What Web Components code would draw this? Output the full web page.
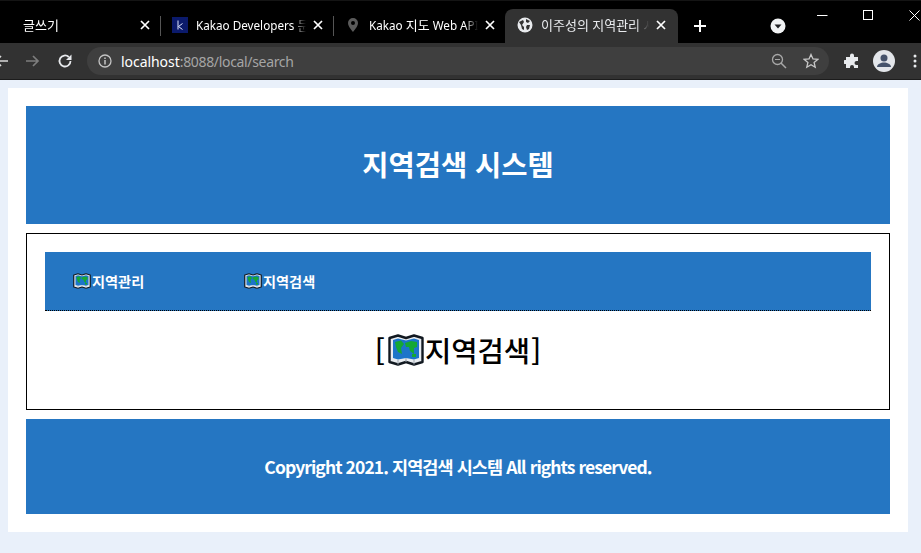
<!DOCTYPE html>
<html lang="ko"><head><meta charset="utf-8"><title>지역검색</title>
<style>
html,body{margin:0;padding:0;width:921px;height:553px;overflow:hidden;background:#e9f0fa;font-family:"Noto Sans CJK KR","Noto Sans",sans-serif}
</style></head><body>
<browser-chrome></browser-chrome>
<app-page>
  <app-banner slot="head" size="28.5" h="118" lift="3">지역검색 시스템</app-banner>
  <main-box slot="main">
    <top-nav slot="nav"><nav-link>지역관리</nav-link><nav-link>지역검색</nav-link></top-nav>
    <span slot="title">지역검색</span>
  </main-box>
  <app-banner slot="foot" size="17.5" h="95" track="-0.92">Copyright 2021. 지역검색 시스템 All rights reserved.</app-banner>
</app-page>
<script>
const mapIcon = `<svg viewBox="0 0 36 32" width="100%" height="100%" style="display:block"><path d="M1.500 4 10 1.500 18 4 26 1.500 34.500 4 34.500 28 26 30.500 18 28 10 30.500 1.500 28Z" fill="#e8ecf0" stroke="#111820" stroke-width="2.400" stroke-linejoin="round"/><path d="M5 6 10 4.500 18 6.500 26 4.500 31 6V24L26 25.500 18 24 10 25.500 5 24Z" fill="#1c75c9"/><path d="M7 8 13 6.500 16 10 13 14 14 20 10 18 8 13ZM17 9 23 7 29 8 29 13 26 14 26 20 22 17 21 13 18 13ZM24 20 28 20 28 23 24 23Z" fill="#14a832"/><path d="M10 30.500V26M26 30.500V26M18 28V24" stroke="#9aa3ad" stroke-width="1"/></svg>`;
function def(name, css, html){
  customElements.define(name, class extends HTMLElement{
    connectedCallback(){ if(this.shadowRoot) return; const r=this.attachShadow({mode:'open'});
      r.innerHTML=`<style>${css}</style>`+(typeof html==='function'?html(this):html); }
  });
}
const x = `<svg width="10" height="10" viewBox="0 0 10 10"><path d="M1 1 9 9M9 1 1 9" stroke="#fff" stroke-width="1.700"/></svg>`;
def('browser-tab',`
 :host{display:flex;align-items:center;box-sizing:border-box;height:34px;width:var(--w,173px);padding:0 10px 3px 12px;color:#fff;font:11.7px "Noto Sans","Noto Sans CJK KR",sans-serif;position:relative}
 :host([active]){background:#323232;border-radius:8px 8px 0 0;color:#e8eaed;padding-right:12px}
 :host([sep])::after{content:"";position:absolute;right:-1px;top:7px;height:20px;width:1px;background:#555}
 .i{width:16px;height:16px;flex:none;margin-right:8px}
 :host([noicon]) .i{display:none}
 .t{flex:1;overflow:hidden;white-space:nowrap;min-width:0;-webkit-mask-image:linear-gradient(90deg,#000 88%,transparent);mask-image:linear-gradient(90deg,#000 88%,transparent)}
 .x{flex:none;width:10px;height:10px;margin-left:7px;display:block}
 .x svg{display:block}
 ::slotted(span){font-size:13px}
`,`<span class="i"><slot name="icon"></slot></span><span class="t"><slot></slot></span><span class="x">${x}</span>`);
def('browser-chrome',`
 :host{display:block;height:80px;background:#000}
 .tabs{height:43px;box-sizing:border-box;padding-top:8px;display:flex;align-items:flex-start;border-top:1px solid #141414;position:relative}
 .tabs>*{flex:none}
 svg{display:block}
 .plus{margin:10px 0 0 15px}
 .drop{margin:9px 0 0 63px}
 .win{display:flex;margin:-8px 0 0 31px}
 .bar{height:36px;background:#323232;display:flex;align-items:center;box-sizing:border-box}
 .omni{margin-left:14px;width:742px;height:28px;border-radius:14px;background:#3f3f3f;display:flex;align-items:center;box-sizing:border-box;padding-left:11px;font:14px "Noto Sans",sans-serif;color:#a5a5a5;flex:none}
 .omni b{font-weight:400;color:#fff;letter-spacing:-.05px}
 .rest{letter-spacing:-.33px}
 .url{margin-left:9px;flex:1}
 .line{height:1px;background:#1c1c1c}
`,`<div class="tabs">
  <browser-tab sep noicon style="--w:160px;padding-left:23px"><span>글쓰기</span></browser-tab>
  <browser-tab sep style="--w:173px"><svg slot="icon" width="16" height="16" viewBox="0 0 16 16" style="display:block"><rect width="16" height="16" fill="#0b1a6b"/><path d="M6 3.500V12.500M10.500 6.500 6.500 9.500 10.500 12.500" stroke="#dfe6ff" fill="none" stroke-width="1"/></svg>Kakao Developers <span>문서</span></browser-tab>
  <browser-tab style="--w:172px"><svg slot="icon" width="16" height="16" viewBox="0 0 16 16" style="display:block"><path d="M8 1a5 5 0 0 0-5 5c0 3.500 5 9 5 9s5-5.500 5-9a5 5 0 0 0-5-5Zm0 7a2 2 0 1 1 0-4 2 2 0 0 1 0 4Z" fill="#5b5b5b"/></svg>Kakao <span>지도</span> Web API</browser-tab>
  <browser-tab active><svg slot="icon" width="16" height="16" viewBox="0 0 16 16" style="display:block"><circle cx="8" cy="8" r="7.500" fill="#e8eaed"/><path d="M2 5 6 3 7 5 5 8 7 10 7 13 5 12 4 8ZM9 2 13 4 11 6 9 5ZM10 8 13 8 12 12 10 13 9 10Z" fill="#323232"/></svg><span>이주성의 지역관리 시스템</span></browser-tab>
  <svg class="plus" width="14" height="14" viewBox="0 0 14 14"><path d="M7 1V13M1 7H13" stroke="#fff" stroke-width="2"/></svg>
  <svg class="drop" width="16" height="16" viewBox="0 0 16 16"><circle cx="8" cy="8" r="7.500" fill="#f1f3f4"/><path d="M4.500 6.500H11.500L8 10.500Z" fill="#202124"/></svg>
  <div class="win">
    <svg width="46" height="20" viewBox="0 0 46 20"><path d="M0 14.500H10.500" stroke="#fff"/></svg>
    <svg width="46" height="20" viewBox="0 0 46 20"><rect x=".5" y="9.500" width="9" height="9" fill="none" stroke="#fff"/></svg>
    <svg width="14" height="20" viewBox="0 0 14 20"><path d="M.5 9.500 10.500 19.500M10.500 9.500.5 19.500" stroke="#fff"/></svg>
  </div>
 </div>
 <div class="bar">
  <svg width="16" height="16" viewBox="0 0 16 16" style="margin-left:-7px;flex:none"><path d="M15 8H3M8 3 3 8 8 13" stroke="#d8d8d8" stroke-width="1.700" fill="none"/></svg>
  <svg width="16" height="16" viewBox="0 0 16 16" style="margin-left:16px;flex:none"><path d="M1 8H13M8 3 13 8 8 13" stroke="#7d7d7d" stroke-width="1.700" fill="none"/></svg>
  <svg width="16" height="16" viewBox="0 0 16 16" style="margin-left:16px;flex:none"><path d="M13.500 8A5.500 5.500 0 1 1 11.800 4" stroke="#e8eaed" stroke-width="1.800" fill="none"/><path d="M14.500 1.500V7H9Z" fill="#e8eaed"/></svg>
  <div class="omni">
   <svg width="14" height="14" viewBox="0 0 14 14" style="flex:none"><circle cx="7" cy="7" r="6" fill="none" stroke="#c4c4c4" stroke-width="1.300"/><path d="M7 6V10.500M7 3.500V5" stroke="#c4c4c4" stroke-width="1.500"/></svg>
   <span class="url"><b>localhost</b><span class="rest">:8088/local/search</span></span>
   <svg width="16" height="16" viewBox="0 0 16 16" style="flex:none"><circle cx="6.500" cy="6.500" r="5" fill="none" stroke="#a8a8a8" stroke-width="1.300"/><path d="M10 10 15 15" stroke="#a8a8a8" stroke-width="1.500"/><path d="M4 6.500H9" stroke="#a8a8a8"/></svg>
   <svg width="16" height="16" viewBox="0 0 16 16" style="flex:none;margin:0 10px 0 16px"><path d="M8 1.500 10 6 14.700 6.400 11.100 9.500 12.200 14.200 8 11.700 3.800 14.200 4.900 9.500 1.300 6.400 6 6Z" fill="none" stroke="#c8c8c8" stroke-width="1.300"/></svg>
  </div>
  <svg width="16" height="16" viewBox="0 0 16 16" style="margin-left:15px;flex:none"><path d="M6 2.500a2 2 0 0 1 4 0V4h4v4h-1.500a2 2 0 0 0 0 4H14v3H10v-1a2 2 0 0 0-4 0v1H2v-4H1a2 2 0 0 1 0-4h1V4h4Z" fill="#e8eaed"/></svg>
  <svg width="24" height="24" viewBox="0 0 24 24" style="margin-left:12px;flex:none"><circle cx="12" cy="12" r="11" fill="#e3e6ea"/><circle cx="12" cy="9" r="3.500" fill="#46536b"/><path d="M5 18c0-3 4-4.500 7-4.500S19 15 19 18Z" fill="#46536b"/></svg>
  <svg width="4" height="14" viewBox="0 0 4 14" style="margin-left:17px;flex:none"><circle cx="2" cy="2" r="1.500" fill="#e8eaed"/><circle cx="2" cy="7" r="1.500" fill="#e8eaed"/><circle cx="2" cy="12" r="1.500" fill="#e8eaed"/></svg>
 </div>
 <div class="line"></div>`);
def('app-page',`
 :host{display:block;box-sizing:border-box;width:900px;height:444px;margin:8px 0 0 8px;background:#fff;padding:18px}
 .g{display:flex;flex-direction:column;gap:9px}
`,`<div class="g"><slot name="head"></slot><slot name="main"></slot><slot name="foot"></slot></div>`);
def('app-banner',`
 :host{display:flex;align-items:center;justify-content:center;box-sizing:border-box;background:#2576c2;color:#fff;font-weight:700;white-space:nowrap}
`,t=>{t.style.height=t.getAttribute('h')+'px';t.style.fontSize=t.getAttribute('size')+'px';t.style.letterSpacing=(t.getAttribute('track')||0)+'px';t.style.paddingBottom=(t.getAttribute('lift')||0)+'px';return `<slot></slot>`});
def('main-box',`
 :host{display:block;box-sizing:border-box;height:177px;border:1px solid #000;padding:18px}
 .title{display:flex;align-items:center;justify-content:center;height:78px;font-size:28.6px;font-weight:500;color:#000;line-height:1;gap:1px}
 .m{width:36px;height:32px;flex:none;margin-left:2px}
`,`<slot name="nav"></slot><div class="title"><span>[</span><span class="m">${mapIcon}</span><slot name="title"></slot><span>]</span></div>`);
def('top-nav',`
 :host{display:flex;align-items:center;box-sizing:border-box;height:59px;background:#2576c2;border-bottom:1px dotted #000;padding:0 0 0 28px;gap:100px}
`,`<slot></slot>`);
def('nav-link',`
 :host{display:flex;align-items:center;color:#fff;font-size:14.2px;font-weight:700;white-space:nowrap;width:71px}
 .m{width:18px;height:16px;flex:none;margin-right:1px}
`,`<span class="m">${mapIcon}</span><slot></slot>`);
</script>
</body></html>
